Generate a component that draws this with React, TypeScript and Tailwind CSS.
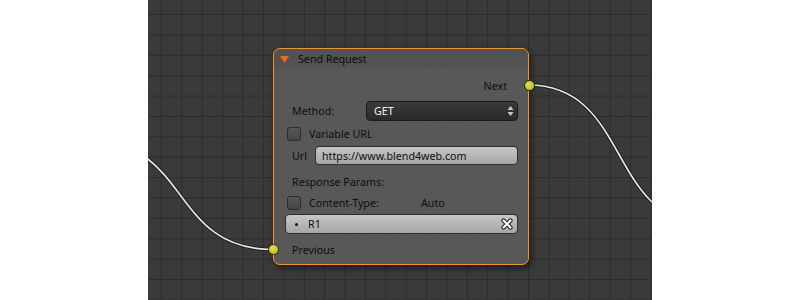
const font = { fontFamily: '"Noto Sans", "Open Sans", sans-serif' };

const Socket = ({ className = '' }: { className?: string }) => (
  <div
    className={`absolute h-[11px] w-[11px] rounded-full border border-[#2a2a14] bg-[radial-gradient(circle_at_40%_35%,#dede52,#c2c030_70%)] ${className}`}
  />
);

const Checkbox = () => (
  <div className="h-[14px] w-[14px] shrink-0 rounded-[3px] border border-[#2b2b2b] bg-gradient-to-b from-[#565656] to-[#474747]" />
);

const UpDown = () => (
  <svg width="7" height="12" viewBox="0 0 7 12" className="shrink-0">
    <path d="M3.5 1 L6.5 5 L0.5 5 Z" fill="#c8c8c8" />
    <path d="M3.5 11 L6.5 7 L0.5 7 Z" fill="#c8c8c8" />
  </svg>
);

const CloseIcon = () => (
  <svg width="12" height="12" viewBox="0 0 12 12" className="shrink-0">
    <path d="M2.5 2.5 L9.5 9.5 M9.5 2.5 L2.5 9.5" stroke="#1a1a1a" strokeWidth="4.2" strokeLinecap="round" />
    <path d="M2.5 2.5 L9.5 9.5 M9.5 2.5 L2.5 9.5" stroke="#ffffff" strokeWidth="2.2" strokeLinecap="round" />
  </svg>
);

function NodeLinks() {
  const links = [
    'M380 85 C484 85 458 224 562 224',
    'M-61 140 C43 140 21 249.5 125 249.5',
  ];
  return (
    <svg className="absolute inset-0" width="504" height="300" viewBox="0 0 504 300">
      {links.map((d) => (
        <g key={d} fill="none">
          <path d={d} stroke="#151515" strokeOpacity="0.7" strokeWidth="3.6" />
          <path d={d} stroke="#e6e6e6" strokeWidth="1.6" />
        </g>
      ))}
    </svg>
  );
}

function SendRequestNode() {
  return (
    <div
      style={font}
      className="absolute left-[125px] top-[48px] flex h-[217px] w-[256px] flex-col rounded-[7px] border border-[#ee9530] bg-[#5e5e5e]/85 text-[10.7px] leading-none text-[#0e0e0e] shadow-[2px_3px_7px_rgba(0,0,0,0.55)]"
    >
      <div className="flex h-[19px] shrink-0 items-center rounded-t-[6px] bg-[#525252]/90 pl-[6px] pt-[2px]">
        <svg width="9" height="7" viewBox="0 0 9 7">
          <path d="M0 0 L9 0 L4.5 7 Z" fill="#e46c1c" />
        </svg>
        <span className="ml-[9px]">Send Request</span>
      </div>

      <div className="relative mt-[8px] flex h-[20px] items-center justify-end pr-[21px] pt-px">
        <span>Next</span>
        <Socket className="right-[-6.5px] top-[4px]" />
      </div>

      <div className="mt-[5px] flex h-[20px] items-center pl-[18px] pr-[10px]">
        <span className="w-[74px] shrink-0 pt-px">Method:</span>
        <div className="flex h-full flex-1 items-center justify-between rounded-[4px] border border-[#1a1a1a] bg-gradient-to-b from-[#3a3a3a] to-[#2a2a2a] pl-[7px] pr-[3px] text-[#f2f2f2]">
          <span className="pt-px">GET</span>
          <UpDown />
        </div>
      </div>

      <div className="mt-[3px] flex h-[20px] items-center gap-[8px] pl-[13px]">
        <Checkbox />
        <span className="pt-px">Variable URL</span>
      </div>

      <div className="mt-[2px] flex h-[19px] items-center pl-[18px] pr-[10px]">
        <span className="w-[23px] shrink-0 pt-px">Url</span>
        <div className="flex h-full flex-1 items-center rounded-[4px] border border-[#2e2e2e] bg-gradient-to-b from-[#c6c6c6] to-[#a6a6a6] pl-[6px] pt-px">
          https://www.blend4web.com
        </div>
      </div>

      <div className="mt-[7px] flex h-[20px] items-center pl-[18px] pt-px">
        <span>Response Params:</span>
      </div>

      <div className="mt-[1px] flex h-[20px] items-center gap-[8px] pl-[13px]">
        <Checkbox />
        <span className="w-[104px] shrink-0 pt-px">Content-Type:</span>
        <span className="pt-px">Auto</span>
      </div>

      <div className="ml-[11px] mr-[10px] mt-[1px] flex h-[20px] items-center rounded-[4px] border border-[#2e2e2e] bg-gradient-to-b from-[#c6c6c6] to-[#a6a6a6] pl-[9px] pr-[4px]">
        <span className="h-[3px] w-[3px] rounded-full bg-[#111]" />
        <span className="ml-[10px] flex-1 pt-px">R1</span>
        <CloseIcon />
      </div>

      <div className="relative mt-[6px] flex h-[20px] items-center pl-[18px] pt-px">
        <span>Previous</span>
        <Socket className="left-[-6.5px] top-[4px]" />
      </div>
    </div>
  );
}

export default function App() {
  return (
    <div className="flex h-[300px] w-[800px] justify-center bg-white">
      <div className="relative h-[300px] w-[504px] overflow-hidden bg-[#3a3a3a] bg-[linear-gradient(to_right,#2c2c2c_1px,transparent_1px),linear-gradient(to_bottom,#2c2c2c_1px,transparent_1px)] bg-[length:20.4px_20.4px] bg-[position:13px_14px]">
        <NodeLinks />
        <SendRequestNode />
      </div>
    </div>
  );
}
